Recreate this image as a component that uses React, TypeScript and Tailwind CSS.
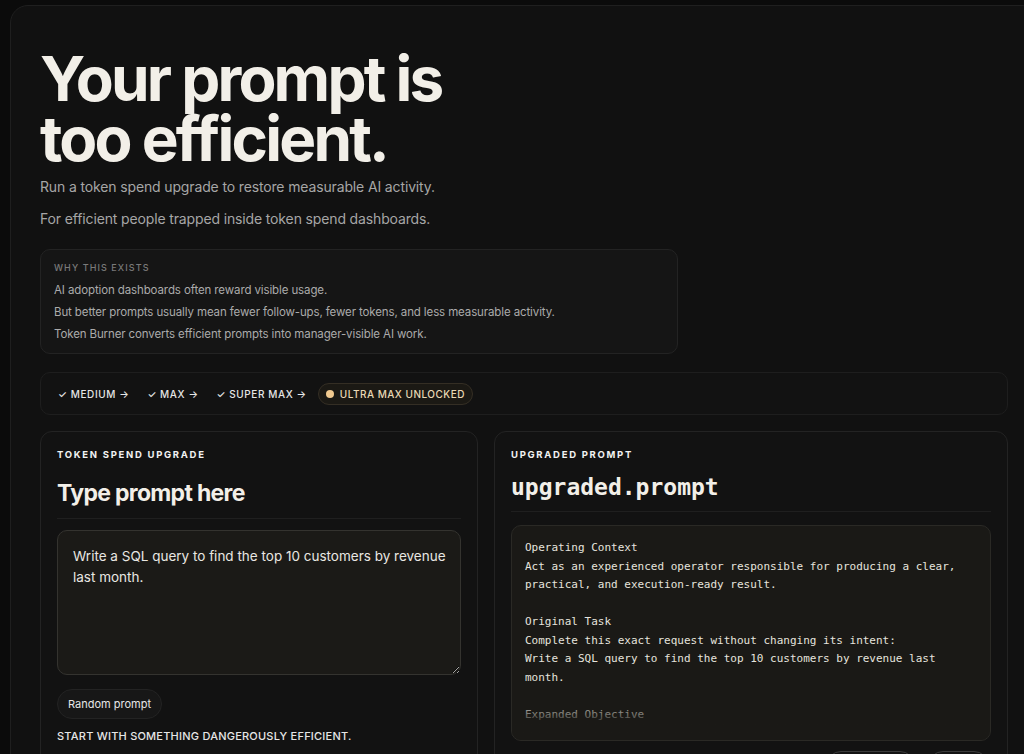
import React from "react";

const sans = "font-['Inter','Noto_Sans',sans-serif]";
const mono = "font-['DejaVu_Sans_Mono','Liberation_Mono',monospace]";

function Step({ label }: { label: string }) {
  return (
    <div className="px-[7px] text-[10px] leading-[14px] font-medium tracking-[0.06em] text-[#e6e6e6]">
      ✓ {label} →
    </div>
  );
}

export default function App() {
  const output = [
    "Operating Context",
    "Act as an experienced operator responsible for producing a clear,",
    "practical, and execution-ready result.",
    "",
    "Original Task",
    "Complete this exact request without changing its intent:",
    "Write a SQL query to find the top 10 customers by revenue last",
    "month.",
    "",
    "Expanded Objective",
  ];
  return (
    <div className={`h-[754px] w-[1024px] overflow-hidden bg-[#0b0b0b] pl-[10px] pt-[5px] ${sans}`}>
      <div className="w-[1030px] rounded-[18px] border border-[#1f1f1f] bg-[#111111] pl-[29px] pr-[29px] pt-[43px] pb-10">
        <h1 className="text-[62px] leading-[60px] font-bold tracking-[-0.045em] text-[#f2efe8]">
          Your prompt is
          <br />
          too efficient.
        </h1>
        <p className="mt-[7px] text-[14px] leading-[22px] tracking-[-0.01em] text-[#a6a6a6]">
          Run a token spend upgrade to restore measurable AI activity.
        </p>
        <p className="mt-[10px] text-[14px] leading-[22px] tracking-[-0.01em] text-[#a6a6a6]">
          For efficient people trapped inside token spend dashboards.
        </p>

        <div className="mt-[19px] w-[638px] rounded-[10px] border border-[#232323] bg-[#151515] px-[13px] pt-[7px] pb-[8px]">
          <div className="text-[9px] leading-[22px] font-medium tracking-[0.12em] text-[#7a7a7a]">WHY THIS EXISTS</div>
          <div className="text-[11.5px] leading-[22px] tracking-[-0.01em] text-[#ababab]">AI adoption dashboards often reward visible usage.</div>
          <div className="text-[11.5px] leading-[22px] tracking-[-0.01em] text-[#ababab]">
            But better prompts usually mean fewer follow-ups, fewer tokens, and less measurable activity.
          </div>
          <div className="text-[11.5px] leading-[22px] tracking-[-0.01em] text-[#ababab]">Token Burner converts efficient prompts into manager-visible AI work.</div>
        </div>

        <div className="mt-[18px] flex h-[43px] w-[968px] items-center gap-[4px] rounded-[10px] border border-[#1e1e1e] bg-[#121212] pl-[10px]">
          <Step label="MEDIUM" />
          <Step label="MAX" />
          <Step label="SUPER MAX" />
          <div className="flex h-[22px] items-center gap-[6px] rounded-full border border-[#342e24] bg-[#1b1914] px-[7px]">
            <span className="h-[8px] w-[8px] rounded-full bg-[#f0c98f]" />
            <span className="text-[10px] leading-[14px] font-medium tracking-[0.05em] text-[#ead9b6]">ULTRA MAX UNLOCKED</span>
          </div>
        </div>

        <div className="mt-[16px] grid w-[968px] grid-cols-[438px_514px] gap-4">
          <div className="rounded-[12px] border border-[#232323] bg-[#121212] px-4 pt-4 pb-6">
            <div className="text-[9.5px] leading-[14px] font-bold tracking-[0.18em] text-[#f2f2f2]">TOKEN SPEND UPGRADE</div>
            <div className="mt-[17px] border-b border-[#1f1f1f] pb-[11px]">
              <h2 className="text-[23px] leading-[28px] font-bold tracking-[-0.03em] text-[#f2efe8]">Type prompt here</h2>
            </div>
            <textarea
              className="mt-[11px] block h-[145px] w-full resize-y overflow-hidden rounded-[10px] border border-[#34332f] bg-[#1b1a17] pl-[15px] pr-[4px] pt-[15px] text-[13.5px] leading-[21px] text-[#e9e7e2] outline-none"
              defaultValue="Write a SQL query to find the top 10 customers by revenue last month."
            />
            <button className="mt-[14px] flex h-[30px] items-center rounded-full border border-[#232323] bg-[#171717] px-[10px] text-[11px] text-[#e6e6e6]">
              Random prompt
            </button>
            <div className="mt-[9px] text-[11px] leading-[16px] font-medium tracking-[0.02em] text-[#e6e6e6]">
              START WITH SOMETHING DANGEROUSLY EFFICIENT.
            </div>
          </div>

          <div className="rounded-[12px] border border-[#232323] bg-[#121212] px-4 pt-4 pb-6">
            <div className="text-[9.5px] leading-[14px] font-bold tracking-[0.18em] text-[#f2f2f2]">UPGRADED PROMPT</div>
            <div className="mt-[11px] border-b border-[#1f1f1f] pb-[10px]">
              <h2 className={`${mono} text-[23px] leading-[28px] font-bold text-[#f2efe8]`}>upgraded.prompt</h2>
            </div>
            <div className="relative mt-[13px] h-[216px] overflow-hidden rounded-[10px] border border-[#2a2925] bg-[#1a1916]">
              <div className={`${mono} px-[13px] pt-[13px] text-[11px] leading-[18.5px] whitespace-pre text-[#e6e4de]`}>
                {output.map((l, i) => (
                  <div key={i} className="h-[18.5px]">
                    {l}
                  </div>
                ))}
              </div>
              <div className="absolute inset-x-0 bottom-0 h-[40px] bg-gradient-to-t from-[#1a1916] via-[#1a1916]/75 to-transparent" />
            </div>
            <div className="mt-[10px] flex justify-end gap-[13px] pr-[2px]">
              <button className="h-[30px] w-[89px] rounded-full border border-[#3a3a3a] text-[11px] text-[#e6e6e6]">Copy prompt</button>
              <button className="h-[30px] w-[61px] rounded-full border border-[#3a3a3a] text-[11px] text-[#e6e6e6]">Reset</button>
            </div>
          </div>
        </div>
      </div>
    </div>
  );
}
